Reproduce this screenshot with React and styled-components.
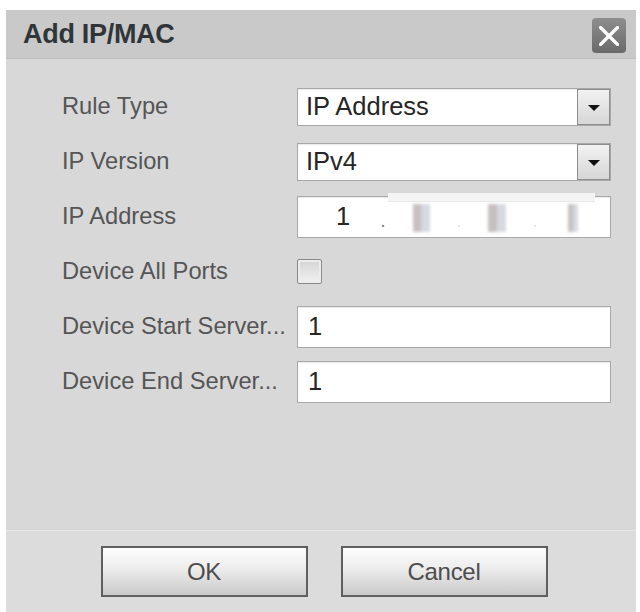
import React from "react";
import styled, { createGlobalStyle } from "styled-components";

const Global = createGlobalStyle`
  html, body { margin: 0; padding: 0; background: #ffffff; }
  body { font-family: "Liberation Sans", Arial, sans-serif; }
  #root { height: 612px; }
`;

const Page = styled.div`
  height: 612px;
  padding: 10px 4px 0 6px;
  box-sizing: border-box;
  display: flex;
`;

const Dialog = styled.div`
  flex: 1;
  display: flex;
  flex-direction: column;
  background: #d8d8d8;
`;

const Header = styled.div`
  height: 49px;
  box-sizing: border-box;
  background: #c9c9c9;
  border-bottom: 1px solid #bdbdbd;
  display: flex;
  align-items: center;
  justify-content: space-between;
  padding: 0 10px 0 17px;
`;

const Title = styled.div`
  font-size: 27px;
  font-weight: bold;
  color: #30353a;
  letter-spacing: -0.3px;
`;

const CloseButton = styled.div`
  width: 34px;
  height: 35px;
  border-radius: 4px;
  background: linear-gradient(#8e8e8e, #6a6a6a);
  display: flex;
  align-items: center;
  justify-content: center;
  margin-top: 3px;
`;

const Body = styled.div`
  flex: 1;
  padding: 20px 25px 0 56px;
  display: grid;
  grid-template-columns: 235px 1fr;
  grid-auto-rows: 55px;
  align-items: center;
  align-content: start;
`;

const Label = styled.div`
  font-size: 23.7px;
  color: #555555;
  white-space: nowrap;
`;

const Field = styled.div`
  height: ${(p) => p.$h || 42}px;
  box-sizing: border-box;
  background: #ffffff;
  border: 1px solid #a8a8a8;
  box-shadow: inset 0 1px 1px rgba(0, 0, 0, 0.08);
  display: flex;
  align-items: center;
  font-size: 25.5px;
  color: #262626;
  padding-left: ${(p) => p.$pad || 10}px;
  position: relative;
`;

const FieldText = styled.span`
  flex: 1;
`;

const DropButton = styled.div`
  width: 33px;
  align-self: stretch;
  box-sizing: border-box;
  border: 1px solid #8d8d8d;
  background: linear-gradient(#f2f2f2, #d6d6d6);
  display: flex;
  align-items: center;
  justify-content: center;
`;

const Triangle = styled.div`
  width: 0;
  height: 0;
  border-left: 6px solid transparent;
  border-right: 6px solid transparent;
  border-top: 6px solid #111;
  margin-top: 2px;
`;

const Octet = styled.span`
  width: ${(p) => p.$w}px;
  display: flex;
  justify-content: center;
  align-items: center;
`;

const Dot = styled.span`
  width: 10px;
  text-align: center;
  color: ${(p) => (p.$faint ? "#e2e2e2" : "#777")};
  font-size: 18px;
  margin-top: 10px;
`;

const Redacted = styled.span`
  display: block;
  width: ${(p) => p.$w}px;
  height: 28px;
  margin-top: 2px;
  background: linear-gradient(90deg, #b8b1b1 0%, #b8b1b1 50%, #cdd0d8 50%, #cdd0d8 100%);
  filter: blur(1.5px);
  opacity: 0.8;
`;

const TopBand = styled.div`
  position: absolute;
  top: -4px;
  left: 90px;
  right: 15px;
  height: 8px;
  background: #f4f4f4;
  border-bottom: 1px solid #eaeaea;
`;

const Checkbox = styled.div`
  width: 25px;
  height: 25px;
  box-sizing: border-box;
  border: 1px solid #8a8a8a;
  border-radius: 2px;
  background: linear-gradient(#d4d4d4, #f2f2f2);
  box-shadow: inset 0 0 0 2px #ececec;
`;

const Footer = styled.div`
  height: 82px;
  box-sizing: border-box;
  background: #dcdcdc;
  border-top: 1px solid #e6e6e6;
  display: flex;
  justify-content: center;
  gap: 33px;
  padding-top: 15px;
  padding-left: 6px;
`;

const Button = styled.div`
  width: 207px;
  height: 51px;
  box-sizing: border-box;
  border: 2px solid #5f5f5f;
  background: linear-gradient(#fdfdfd 0%, #ececec 45%, #c9c9c9 100%);
  display: flex;
  align-items: center;
  justify-content: center;
  font-size: 24px;
  color: #4d4d4d;
  letter-spacing: -0.3px;
`;

function Select({ value }) {
  return (
    <Field $h={38} $pad={8}>
      <FieldText>{value}</FieldText>
      <DropButton>
        <Triangle />
      </DropButton>
    </Field>
  );
}

export default function App() {
  return (
    <>
      <Global />
      <Page>
        <Dialog>
          <Header>
            <Title>Add IP/MAC</Title>
            <CloseButton>
              <svg width="20" height="20" viewBox="0 0 20 20">
                <path d="M1.5 1.5 L18.5 18.5 M18.5 1.5 L1.5 18.5" stroke="#ffffff" strokeWidth="3.2" strokeLinecap="round" />
              </svg>
            </CloseButton>
          </Header>
          <Body>
            <Label>Rule Type</Label>
            <Select value="IP Address" />
            <Label>IP Version</Label>
            <Select value="IPv4" />
            <Label>IP Address</Label>
            <Field $pad={0}>
              <TopBand />
              <Octet $w={70}>1</Octet>
              <Dot>.</Dot>
              <Octet $w={66}><Redacted $w={17} /></Octet>
              <Dot $faint>.</Dot>
              <Octet $w={66}><Redacted $w={18} /></Octet>
              <Dot $faint>.</Dot>
              <Octet $w={66}><Redacted $w={10} /></Octet>
            </Field>
            <Label>Device All Ports</Label>
            <div>
              <Checkbox />
            </div>
            <Label>Device Start Server...</Label>
            <Field>
              <FieldText>1</FieldText>
            </Field>
            <Label>Device End Server...</Label>
            <Field>
              <FieldText>1</FieldText>
            </Field>
          </Body>
          <Footer>
            <Button>OK</Button>
            <Button>Cancel</Button>
          </Footer>
        </Dialog>
      </Page>
    </>
  );
}
